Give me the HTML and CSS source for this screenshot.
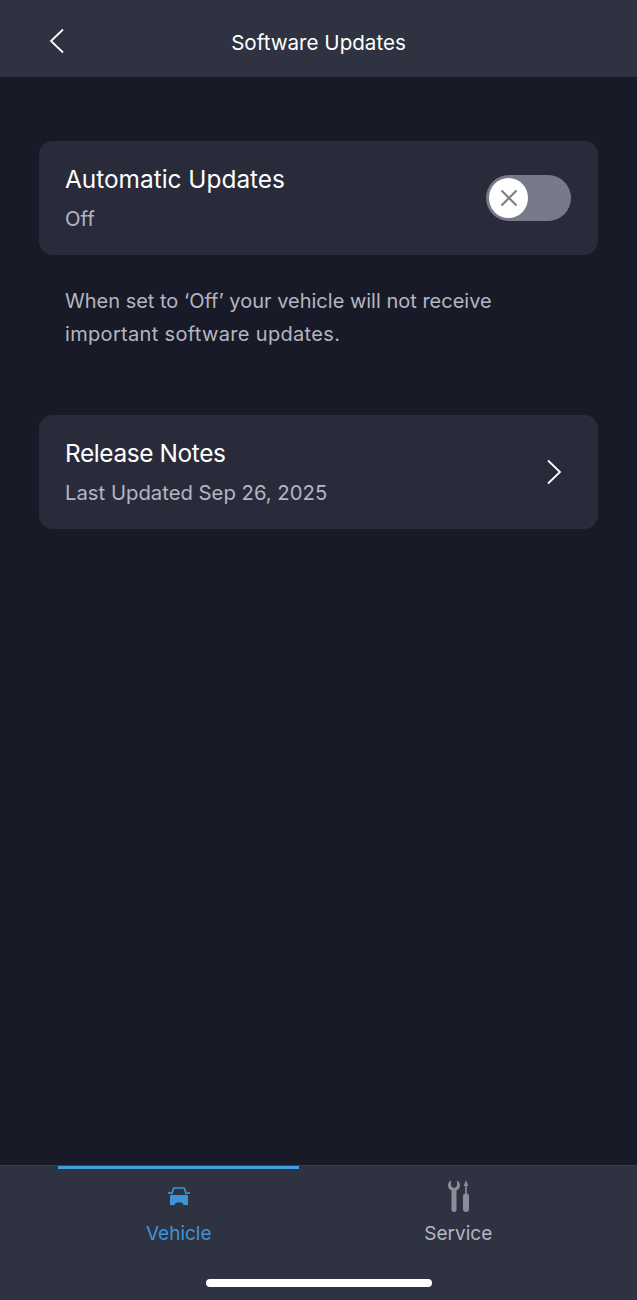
FILE: index.html
```html
<!DOCTYPE html>
<html lang="en">
<head>
    <meta charset="UTF-8">
    <meta name="viewport" content="width=device-width, initial-scale=1.0">
    <title>Software Updates</title>
    <link rel="stylesheet" href="styles.css">
</head>
<body>
    <div class="screen">
        <header class="topbar">
            <button class="back" aria-label="Back">
                <svg width="16" height="26" viewBox="0 0 16 26"><path d="M14 1.500 2 13l12 11.500" fill="none" stroke="#fff" stroke-width="1.800"/></svg>
            </button>
            <h1>Software Updates</h1>
        </header>

        <main class="content">
            <section class="card">
                <div class="card-text">
                    <h2>Automatic Updates</h2>
                    <p>Off</p>
                </div>
                <div class="toggle">
                    <span class="knob">
                        <svg width="18" height="18" viewBox="0 0 18 18"><path d="M1.500 1.500l15 15M16.500 1.500l-15 15" fill="none" stroke="#7f8189" stroke-width="2.200"/></svg>
                    </span>
                </div>
            </section>

            <p class="note">When set to ‘Off’ your vehicle will not receive<br><span class="note-wide">important software updates.</span></p>

            <section class="card">
                <div class="card-text">
                    <h2 class="tight">Release Notes</h2>
                    <p>Last Updated Sep 26, 2025</p>
                </div>
                <svg class="chevron" width="16" height="26" viewBox="0 0 16 26"><path d="M2 1.500 14 13 2 24.500" fill="none" stroke="#fff" stroke-width="1.800"/></svg>
            </section>
        </main>

        <nav class="tabbar">
            <div class="tab active">
                <span class="tab-icon">
                    <svg width="22" height="18" viewBox="0 0 22 18">
                        <path d="M0 5.500l3.500 1M22 5.500l-3.500 1M3.800 7l1.700-5.200C5.700 1.200 6.200 1 6.800 1h8.400c.6 0 1.100.2 1.300.8L18.200 7" fill="none" stroke="#3d94d6" stroke-width="1.700"/>
                        <path fill="#3d94d6" d="M3.500 8h15c1 0 1.500.7 1.500 1.500V18h-4.500c-.4-1.800-1.500-2.800-4.500-2.800S6.900 16.200 6.500 18H2V9.500C2 8.700 2.500 8 3.500 8z"/>
                    </svg>
                </span>
                <span>Vehicle</span>
            </div>
            <div class="tab">
                <span class="tab-icon">
                    <svg width="21" height="32" viewBox="0 0 21 32">
                        <path fill="#8b8e99" d="M3 .5V6l3 2.200L9 6V.500c1.900.9 3 2.900 3 5 0 2.200-1.100 4-3.500 5V30.300a2.500 1.700 0 0 1-5 0V10.500C1.100 9.500 0 7.700 0 5.500 0 3.400 1.100 1.400 3 .500z"/>
                        <path fill="#8b8e99" d="M18 0l2.300 6h-1.500v7.600c1.300.3 2.200 1.300 2.200 2.400V29a3 3 0 0 1-6 0V16c0-1.100.9-2.100 2.200-2.400V6h-1.500z"/>
                    </svg>
                </span>
                <span>Service</span>
            </div>
            <div class="home-bar"></div>
        </nav>
    </div>
</body>
</html>
```

FILE: styles.css
```css
* {
    box-sizing: border-box;
}
html, body {
    margin: 0;
    padding: 0;
}
body {
    font-family: 'Inter', 'Noto Sans', sans-serif;
    background-color: #181b27;
}
.screen {
    width: 637px;
    height: 1300px;
    display: flex;
    flex-direction: column;
    overflow: hidden;
}
.topbar {
    position: relative;
    height: 77px;
    flex: none;
    display: flex;
    align-items: center;
    justify-content: center;
    padding-top: 8px;
    background-color: #2f3240;
    border-bottom: 1px solid #282b38;
}
.topbar h1 {
    margin: 0;
    font-size: 20.6px;
    font-weight: 400;
    color: #fff;
}
.back {
    position: absolute;
    left: 49px;
    top: 28px;
    padding: 0;
    border: none;
    background: none;
    line-height: 0;
}
.content {
    flex: 1;
    padding: 64px 39px 0;
}
.card {
    height: 114px;
    padding: 0 27px 0 26px;
    display: flex;
    align-items: center;
    justify-content: space-between;
    background-color: #292b3b;
    border-radius: 14px;
}
.card-text h2 {
    margin: 0 0 13px;
    font-size: 24.4px;
    line-height: 28px;
    font-weight: 400;
    color: #fff;
}
.card-text h2.tight {
    letter-spacing: -0.38px;
}
.card-text p {
    margin: 0;
    font-size: 20.3px;
    line-height: 26px;
    color: #b4b6c2;
}
.toggle {
    width: 85px;
    height: 46px;
    padding: 3px;
    background-color: #777a89;
    border-radius: 23px;
}
.knob {
    width: 39px;
    height: 40px;
    display: flex;
    align-items: center;
    justify-content: center;
    background-color: #fff;
    border-radius: 50%;
}
.chevron {
    margin-right: 9px;
}
.note {
    margin: 30px 26px 0;
    height: 130px;
    font-size: 20px;
    line-height: 33px;
    color: #b4b6c2;
}
.note-wide {
    letter-spacing: 0.33px;
}
.tabbar {
    position: relative;
    height: 135px;
    flex: none;
    display: flex;
    padding: 0 39px;
    background-color: #2f3240;
    border-top: 1px solid #3a3d4b;
}
.tab {
    width: 280px;
    display: flex;
    flex-direction: column;
    align-items: center;
    font-size: 19px;
    color: #b4b6c2;
}
.tab-icon {
    height: 32px;
    margin-top: 14px;
    margin-bottom: 10px;
    display: flex;
    align-items: center;
}
.tab.active {
    color: #3d94d6;
}
.tab.active::before {
    content: "";
    position: absolute;
    left: 58px;
    top: 0;
    width: 241px;
    height: 3px;
    background-color: #3d9fe6;
}
.home-bar {
    position: absolute;
    left: 206px;
    top: 113px;
    width: 226px;
    height: 8px;
    background-color: #fff;
    border-radius: 4px;
}
```
